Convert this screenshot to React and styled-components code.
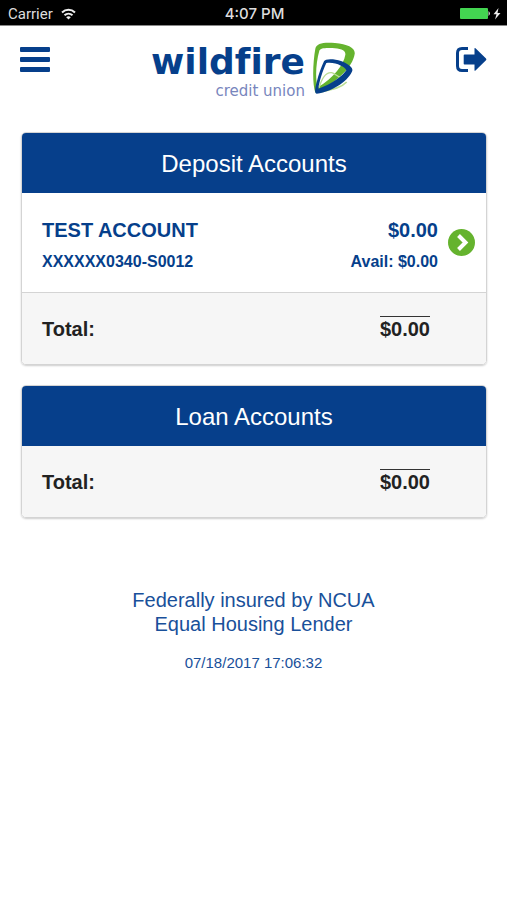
import React from "react";
import styled, { createGlobalStyle } from "styled-components";

const GlobalStyle = createGlobalStyle`
  * {
    box-sizing: border-box;
  }

  body {
    margin: 0;
    background: white;
    color: #222;
    font-family: "Liberation Sans", Arial, sans-serif;
  }
`;

const accounts = [
  {
    title: "Deposit Accounts",
    total: "$0.00",
    items: [
      {
        name: "TEST ACCOUNT",
        number: "XXXXXX0340-S0012",
        balance: "$0.00",
        available: "$0.00"
      }
    ]
  },
  { title: "Loan Accounts", total: "$0.00", items: [] }
];

// * Status Bar
const StatusBar = styled.div`
  display: grid;
  grid-template-columns: 1fr auto 1fr;
  align-items: center;
  height: 26px;
  padding: 2px 6px 0 8px;
  border-bottom: 1px solid #888;
  background: black;
  color: #ddd;
  font-family: Roboto, sans-serif;
  font-size: 15px;
`;

const StatusGroup = styled.div`
  display: flex;
  align-items: center;
  gap: 8px;
  justify-content: ${props => (props.$end ? "flex-end" : "flex-start")};
`;

const Clock = styled.span`
  font-family: Inter, sans-serif;
  font-weight: 500;
`;

// * Header
const Header = styled.header`
  display: flex;
  align-items: flex-start;
  justify-content: space-between;
  padding: 16px 20px 0;
`;

const IconButton = styled.button`
  display: flex;
  margin: 5px 0 0;
  padding: 0;
  border: 0;
  background: none;
  color: #063f8b;
  cursor: pointer;
`;

const Logo = styled.a`
  display: flex;
  gap: 8px;
  color: #063f8b;
  text-decoration: none;
  font-family: "DejaVu Sans", sans-serif;
`;

const LogoWords = styled.span`
  display: flex;
  flex-direction: column;
  align-items: flex-end;
`;

const LogoName = styled.span`
  font-size: 36px;
  font-variant-ligatures: none;
  font-weight: bold;
  line-height: 40px;
`;

const LogoTag = styled.span`
  color: #7886bd;
  font-size: 15px;
  line-height: 18px;
`;

// * Account Cards
const Main = styled.main`
  display: flex;
  flex-direction: column;
  gap: 20px;
  padding: 32px 20px 0 21px;
`;

const Card = styled.section`
  overflow: hidden;
  border: 1px solid #d4d4d4;
  border-radius: 5px;
  box-shadow: 0 1px 2px rgba(0, 0, 0, 0.2);
`;

const CardTitle = styled.h2`
  margin: 0;
  padding-top: 2px;
  background: #063f8b;
  color: white;
  font-size: 24px;
  font-weight: normal;
  line-height: 58px;
  text-align: center;
`;

const AccountLink = styled.a`
  display: flex;
  align-items: center;
  gap: 10px;
  height: 100px;
  padding: 0 11px 0 20px;
  border-bottom: 1px solid #d4d4d4;
  background: white;
  color: #063f8b;
  font-weight: bold;
  text-decoration: none;
`;

const AccountColumn = styled.span`
  display: flex;
  flex: ${props => (props.$end ? "none" : "1")};
  flex-direction: column;
  gap: 8px;
  padding-top: 6px;
  text-align: ${props => (props.$end ? "right" : "left")};
`;

const Primary = styled.span`
  font-size: 20px;
  line-height: 24px;
`;

const Secondary = styled.span`
  font-size: 16px;
  line-height: 24px;
`;

const TotalRow = styled.div`
  display: flex;
  align-items: center;
  justify-content: space-between;
  height: 71px;
  padding: 0 56px 0 20px;
  background: #f6f6f6;
  font-size: 20px;
  font-weight: bold;
  line-height: 24px;
`;

const TotalAmount = styled.span`
  border-top: 1px solid #333;
`;

// * Footer
const Footer = styled.footer`
  padding: 70px 20px 0;
  color: #19509a;
  font-size: 20px;
  line-height: 24px;
  text-align: center;
`;

const Notice = styled.p`
  margin: 0;
`;

const Timestamp = styled.time`
  display: block;
  margin-top: 15px;
  font-size: 15px;
`;

function WifiIcon() {
  return (
    <svg width="15" height="12" viewBox="0 0 15 12" fill="none" stroke="#eee" strokeWidth="2">
      <path d="M1 4.4C4.8.8 10.2.8 14 4.4" />
      <path d="M3.5 7.2c2.3-2.1 5.7-2.1 8 0" />
      <path d="M7.5 11.5 5.2 9.2c1.3-1.3 3.3-1.3 4.6 0z" fill="#eee" stroke="none" />
    </svg>
  );
}

function BatteryIcon() {
  return (
    <svg width="41" height="13" viewBox="0 0 41 13">
      <rect x="0" y="1" width="28" height="11" rx="1" fill="#43d551" />
      <path d="M28.500 4q3 2.500 0 5z" fill="#ccc" />
      <path d="M38.500 1 33.500 7.200h3l-1.500 5.300L40.500 6h-3z" fill="#eee" />
    </svg>
  );
}

function MenuIcon() {
  return (
    <svg width="30" height="25" viewBox="0 0 30 25" fill="currentColor">
      <rect width="30" height="5" rx="1" />
      <rect y="10" width="30" height="5" rx="1" />
      <rect y="20" width="30" height="5" rx="1" />
    </svg>
  );
}

function SignOutIcon() {
  return (
    <svg width="31" height="25" viewBox="0 0 31 25" fill="currentColor">
      <path
        d="M12 1.500H6Q1.500 1.500 1.500 6v13Q1.500 23.500 6 23.500h6"
        fill="none"
        stroke="currentColor"
        strokeWidth="3"
      />
      <path d="M8.500 7.500h10V1.500Q18.500.5 19.500 1.300L30 11.500q.8.9 0 1.800L19.500 23.500q-1 .8-1-.3V17.500h-10q-.8 0-.8-.8V8.300q0-.8.8-.8z" />
    </svg>
  );
}

function LogoMark() {
  return (
    <svg width="42" height="52" viewBox="222 22 126 156">
      <path
        fillRule="evenodd"
        fill="#65b32e"
        d="M229 42C232 25 256 22 288 25C326 28 350 40 347 58C341 98 292 144 229 174C219 145 222 80 229 42ZM241 48C231 83 228 130 236 158C284 130 314 90 319 60C321 46 302 41 280 40C258 39 244 40 241 48Z"
      />
      <path d="M240 160C248 132 262 112 278 114C290 116 292 128 312 130" fill="none" stroke="#b9dc92" strokeWidth="4" />
      <path d="M242 172C280 164 306 160 323 142" fill="none" stroke="#b9dc92" strokeWidth="5" />
      <path
        fillRule="evenodd"
        fill="#063f8b"
        d="M255 80C258 71 286 72 306 79C327 87 343 99 340 108C332 133 284 171 233 177C225 176 229 158 233 143C239 117 247 98 255 80ZM262 85C251 108 241 140 238 162C278 150 312 122 322 107C318 97 290 81 262 85Z"
      />
    </svg>
  );
}

function ChevronBadge() {
  return (
    <svg width="27" height="27" viewBox="0 0 27 27">
      <circle cx="13.500" cy="13.500" r="13.500" fill="#65b32e" />
      <path d="m10.500 6.500 7 7-7 7" fill="none" stroke="white" strokeWidth="4" />
    </svg>
  );
}

function Account({ item }) {
  return (
    <AccountLink href="#account">
      <AccountColumn>
        <Primary>{item.name}</Primary>
        <Secondary>{item.number}</Secondary>
      </AccountColumn>
      <AccountColumn $end>
        <Primary>{item.balance}</Primary>
        <Secondary>Avail: {item.available}</Secondary>
      </AccountColumn>
      <ChevronBadge />
    </AccountLink>
  );
}

function AccountGroup({ group }) {
  return (
    <Card>
      <CardTitle>{group.title}</CardTitle>
      {group.items.map(item => (
        <Account key={item.number} item={item} />
      ))}
      <TotalRow>
        <span>Total:</span>
        <TotalAmount>{group.total}</TotalAmount>
      </TotalRow>
    </Card>
  );
}

export default function App() {
  return (
    <>
      <GlobalStyle />
      <StatusBar>
        <StatusGroup>
          Carrier <WifiIcon />
        </StatusGroup>
        <Clock>4:07 PM</Clock>
        <StatusGroup $end>
          <BatteryIcon />
        </StatusGroup>
      </StatusBar>
      <Header>
        <IconButton aria-label="Menu">
          <MenuIcon />
        </IconButton>
        <Logo href="#home">
          <LogoWords>
            <LogoName>wildfire</LogoName>
            <LogoTag>credit union</LogoTag>
          </LogoWords>
          <LogoMark />
        </Logo>
        <IconButton aria-label="Sign out">
          <SignOutIcon />
        </IconButton>
      </Header>
      <Main>
        {accounts.map(group => (
          <AccountGroup key={group.title} group={group} />
        ))}
      </Main>
      <Footer>
        <Notice>Federally insured by NCUA</Notice>
        <Notice>Equal Housing Lender</Notice>
        <Timestamp>07/18/2017 17:06:32</Timestamp>
      </Footer>
    </>
  );
}
